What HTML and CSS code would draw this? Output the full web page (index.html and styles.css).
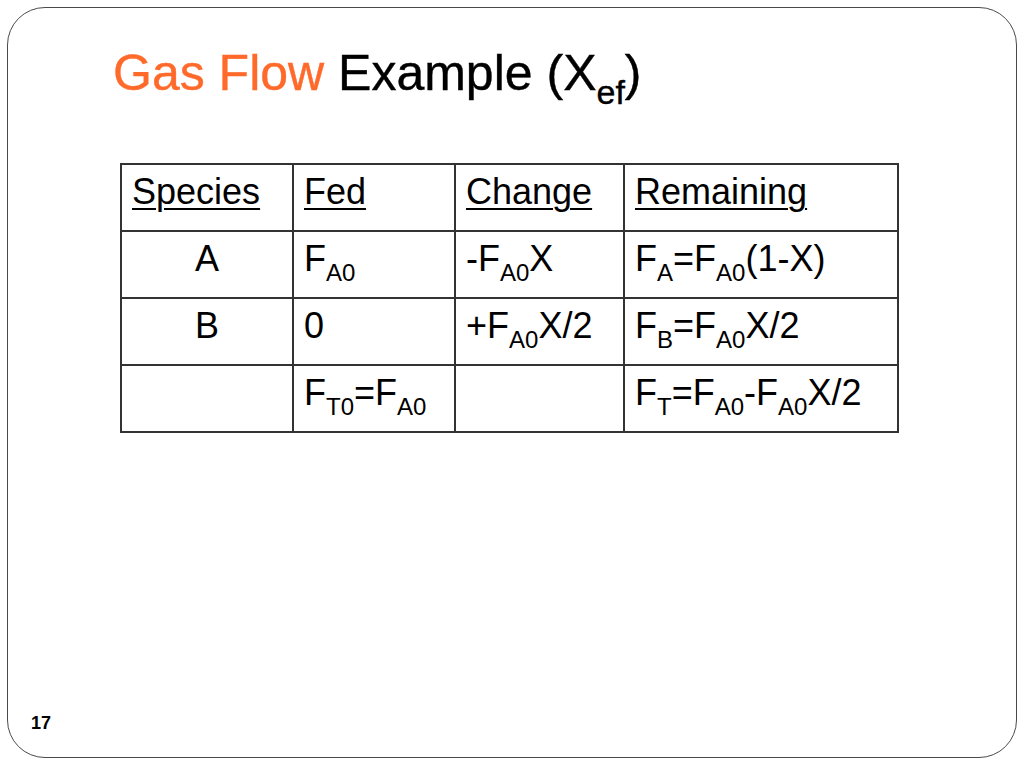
FILE: index.html
```html
<!DOCTYPE html>
<html lang="en">
<head>
<meta charset="utf-8">
<title>Gas Flow Example</title>
<link rel="stylesheet" href="styles.css">
</head>
<body>
<div class="slide">
  <h1 class="title"><span class="accent">Gas Flow</span> Example (X<sub class="tsub">ef</sub>)</h1>
  <table class="grid">
    <colgroup>
      <col class="c1"><col class="c2"><col class="c3"><col class="c4">
    </colgroup>
    <tr>
      <td><u>Species</u></td>
      <td><u>Fed</u></td>
      <td><u>Change</u></td>
      <td><u>Remaining</u></td>
    </tr>
    <tr>
      <td class="center">A</td>
      <td>F<sub>A0</sub></td>
      <td>-F<sub>A0</sub>X</td>
      <td>F<sub>A</sub>=F<sub>A0</sub>(1-X)</td>
    </tr>
    <tr>
      <td class="center">B</td>
      <td>0</td>
      <td>+F<sub>A0</sub>X/2</td>
      <td>F<sub>B</sub>=F<sub>A0</sub>X/2</td>
    </tr>
    <tr>
      <td></td>
      <td>F<sub>T0</sub>=F<sub>A0</sub></td>
      <td></td>
      <td>F<sub>T</sub>=F<sub>A0</sub>-F<sub>A0</sub>X/2</td>
    </tr>
  </table>
  <div class="pagenum">17</div>
</div>
</body>
</html>
```

FILE: styles.css
```css
html, body {
  margin: 0;
  padding: 0;
  background: #ffffff;
}

body {
  font-family: "Liberation Sans", Arial, sans-serif;
  color: #000;
  width: 1024px;
  height: 768px;
  overflow: hidden;
}

.slide {
  box-sizing: border-box;
  margin: 7px 0 0 7px;
  width: 1010px;
  height: 751px;
  border: 1px solid #4a4a4a;
  border-radius: 38px;
  display: flex;
  flex-direction: column;
  position: relative;
}

.title {
  margin: 35px 0 0 105px;
  height: 60px;
  font-size: 50px;
  line-height: 60px;
  font-weight: normal;
  color: #000;
  white-space: nowrap;
  -webkit-text-stroke: 0.4px currentColor;
}

.accent {
  color: #ff6a2b;
}

.tsub {
  font-size: 34px;
  line-height: 1;
  vertical-align: -14px;
}

.grid {
  margin: 60px 0 0 112px;
  border-collapse: collapse;
  table-layout: fixed;
  width: 777px;
  font-size: 36px;
}

.c1 { width: 172px; }
.c2 { width: 162px; }
.c3 { width: 169px; }
.c4 { width: 274px; }

.grid tr {
  height: 67px;
}

.grid td {
  border: 2px solid #333;
  padding: 6px 0 0 10px;
  vertical-align: top;
  line-height: 41px;
  white-space: nowrap;
}

.grid td.center {
  text-align: center;
  padding-left: 0;
}

.grid u {
  text-decoration-thickness: 2px;
  text-underline-offset: 4px;
}

.grid sub {
  font-size: 24px;
  line-height: 1;
  vertical-align: -10px;
}

.pagenum {
  position: absolute;
  left: 23px;
  top: 705px;
  font-size: 18px;
  font-weight: bold;
}
```
